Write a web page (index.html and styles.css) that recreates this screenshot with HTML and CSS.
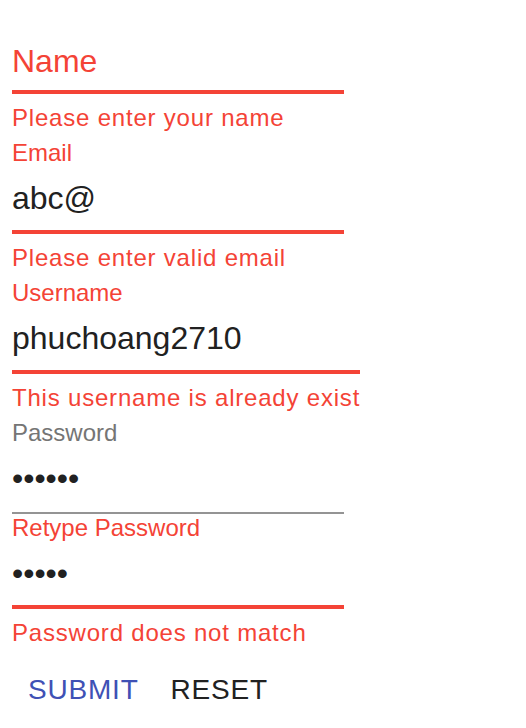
FILE: index.html
```html
<!DOCTYPE html>
<html lang="en">
<head>
<meta charset="utf-8">
<title>Sign up</title>
<link rel="stylesheet" href="styles.css">
</head>
<body>
<form class="form" novalidate>
  <div class="field field--error field--empty">
    <label class="field__label field__label--placeholder" for="name">Name</label>
    <input class="field__input" id="name" type="text" value="">
    <p class="field__helper">Please enter your name</p>
  </div>
  <div class="field field--error">
    <label class="field__label" for="email">Email</label>
    <input class="field__input" id="email" type="text" value="abc@">
    <p class="field__helper">Please enter valid email</p>
  </div>
  <div class="field field--error">
    <label class="field__label" for="username">Username</label>
    <input class="field__input" id="username" type="text" value="phuchoang2710">
    <p class="field__helper">This username is already exist</p>
  </div>
  <div class="field">
    <label class="field__label" for="password">Password</label>
    <input class="field__input" id="password" type="password" value="123456">
  </div>
  <div class="field field--error">
    <label class="field__label" for="retype">Retype Password</label>
    <input class="field__input" id="retype" type="password" value="12345">
    <p class="field__helper">Password does not match</p>
  </div>
  <div class="actions">
    <button class="btn btn--primary" type="submit">Submit</button>
    <button class="btn" type="reset">Reset</button>
  </div>
</form>
</body>
</html>
```

FILE: styles.css
```css
html, body {
  margin: 0;
  padding: 0;
  background: #ffffff;
}

body {
  font-family: "Liberation Sans", Arial, Helvetica, sans-serif;
}

.form {
  display: flex;
  flex-direction: column;
  align-items: flex-start;
  padding: 0 12px;
  margin-top: -1px;
}

.field {
  position: relative;
  display: flex;
  flex-direction: column;
  min-width: 332px;
}

.field__label {
  display: block;
  height: 27px;
  font-size: 24px;
  line-height: 27px;
  color: #757575;
  white-space: nowrap;
}

.field--error .field__label {
  color: #f44336;
}

.field--empty {
  padding-top: 27px;
}

.field__label--placeholder {
  position: absolute;
  left: 0;
  top: 46px;
  height: 32px;
  font-size: 32px;
  line-height: 32px;
}

.field__input {
  display: block;
  box-sizing: border-box;
  width: 0;
  min-width: 100%;
  height: 68px;
  margin: 0;
  padding: 13px 0 15px;
  border: 0;
  border-bottom: 2px solid #949494;
  border-radius: 0;
  background: transparent;
  font-family: inherit;
  font-size: 32px;
  line-height: 38px;
  color: #212121;
  outline: none;
}

.field--error .field__input {
  border-bottom: 4px solid #f44336;
  padding-bottom: 13px;
}

.field__helper {
  margin: 4px 0 1px;
  font-size: 24px;
  line-height: 40px;
  letter-spacing: 0.8px;
  color: #f44336;
  white-space: nowrap;
}

.actions {
  display: flex;
  margin-top: 2px;
}

.btn {
  min-width: 128px;
  margin: 0;
  padding: 12px 16px;
  border: 0;
  background: transparent;
  font-family: inherit;
  font-size: 28px;
  line-height: 44px;
  letter-spacing: 0.8px;
  text-transform: uppercase;
  color: #212121;
  cursor: pointer;
}

.btn--primary {
  color: #3f51b5;
}
```
